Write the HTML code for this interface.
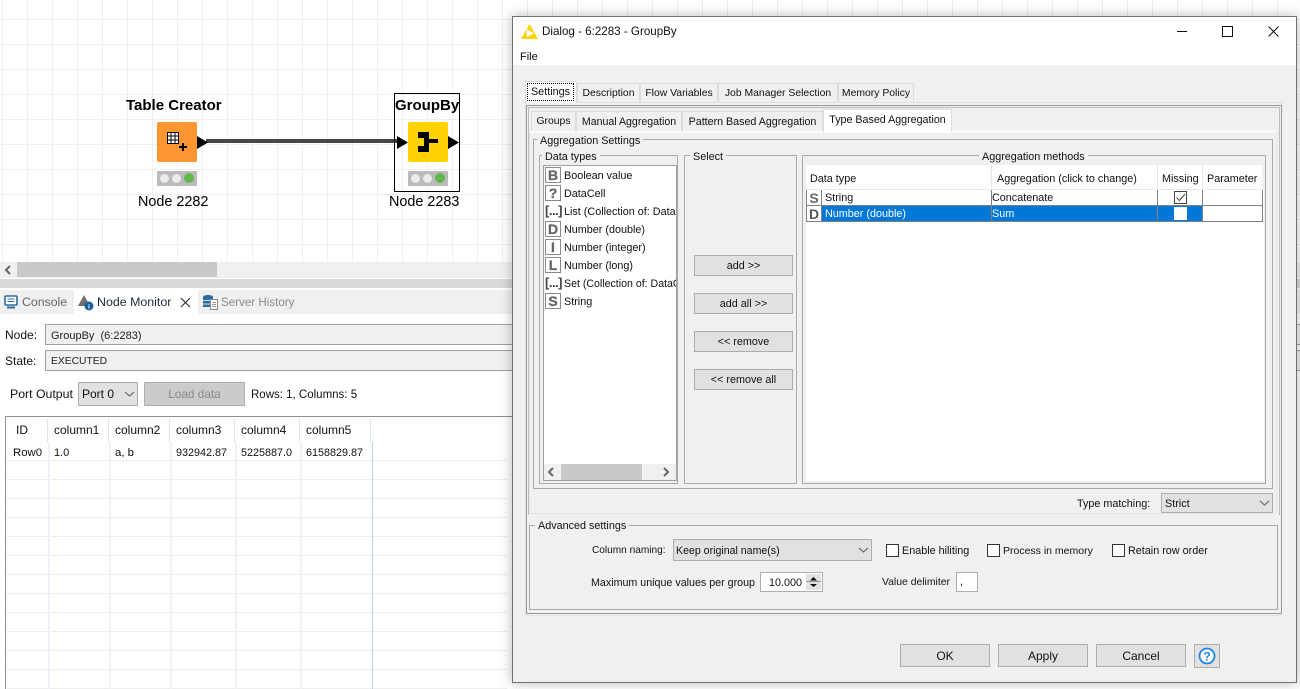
<!DOCTYPE html>
<html><head><meta charset="utf-8"><title>GroupBy</title>
<style>
html,body{margin:0;padding:0}
body{width:1300px;height:689px;overflow:hidden;position:relative;background:#fff;font:10.8px/14px "Liberation Sans",Arial,sans-serif;color:#111}
div,span,svg{position:absolute;box-sizing:border-box}
.t{white-space:nowrap;line-height:14px}
.l{background:#f0f0f0;padding:1px 3px 0 3px;white-space:nowrap;line-height:14px}
.b{background:#e1e1e1;border:1px solid #adadad;text-align:center;white-space:nowrap}
.g{border:1px solid #a9a9a9}
.ti{width:16px;height:16px;left:545px;border:1px solid #8a8a8a;background:#fff;color:#666;font:bold 14px/14px "Liberation Sans",sans-serif;text-align:center;-webkit-text-stroke:.3px #666}
.tb{background:#f0f0f0;border:1px solid #dcdcdc;border-bottom:0;text-align:center;white-space:nowrap;line-height:20px}
.o{font-size:10.4px}
.cb{width:13px;height:13px;border:1px solid #333;background:#fff}
.hl{height:1px;background:#eee;left:7px;width:500px}
.vl{width:2px;background:#eef3fa;top:442px;height:247px}
.s{font-size:12px}
</style></head><body>

<!-- canvas -->
<div style="left:0;top:0;width:1300px;height:262px;background-color:#fff;background-image:linear-gradient(to right,#efefef 1px,transparent 1px),linear-gradient(to bottom,#efefef 1px,transparent 1px);background-size:25px 25px;background-position:2px 19px"></div>
<div style="left:0;top:262px;width:1300px;height:16px;background:#f0f0f0"></div>
<div style="left:17px;top:262px;width:200px;height:15px;background:#c9c9c9"></div>
<svg style="left:4px;top:265px" width="9" height="10"><polyline points="6,1 2,5 6,9" fill="none" stroke="#666" stroke-width="2"/></svg>
<div style="left:0;top:279px;width:1300px;height:9px;background:#dadada"></div>
<div style="left:0;top:290px;width:1300px;height:24px;background:#f0f0f0"></div>

<!-- nodes -->
<div class="t" style="left:126px;top:98px;font:bold 15px/16px 'Liberation Sans',sans-serif;color:#000">Table Creator</div>
<div style="left:157px;top:122px;width:40px;height:40px;background:#ff9632;border-radius:2px"></div>
<svg style="left:157px;top:122px" width="40" height="40">
<rect x="10.5" y="10.5" width="11" height="11" fill="#fff" stroke="#000"/>
<path d="M14 10v12M18 10v12M10 14h12M10 18h12" stroke="#000" stroke-width="1"/>
<path d="M26 21v8M22 25h8" stroke="#000" stroke-width="2"/>
</svg>
<div style="left:206px;top:139px;width:192px;height:4px;background:#474747"></div>
<svg style="left:197px;top:136px" width="12" height="13"><path d="M0 0L11 6.5L0 13Z" fill="#000"/></svg>
<svg style="left:397px;top:136px" width="12" height="13"><path d="M0 0L11 6.5L0 13Z" fill="#000"/></svg>
<div style="left:157px;top:171px;width:40px;height:15px;background:#bbb"></div>
<div style="left:160px;top:174px;width:9px;height:9px;border-radius:50%;background:#ececec"></div>
<div style="left:172px;top:174px;width:9px;height:9px;border-radius:50%;background:#ececec"></div>
<div style="left:184px;top:173px;width:10px;height:10px;border-radius:50%;background:#63b84b"></div>
<div class="t" style="left:138px;top:194px;font-size:14.4px;line-height:16px;color:#000">Node 2282</div>

<div style="left:394px;top:93px;width:66px;height:99px;border:1px solid #000"></div>
<div class="t" style="left:395px;top:98px;font:bold 15px/16px 'Liberation Sans',sans-serif;color:#000">GroupBy</div>
<div style="left:408px;top:122px;width:40px;height:40px;background:#ffd200;border-radius:2px"></div>
<svg style="left:408px;top:122px" width="40" height="40"><path d="M10 10H21V17H30V21H21V30H10V24H16V16H10Z" fill="#000"/></svg>
<svg style="left:448px;top:136px" width="12" height="13"><path d="M0 0L11 6.5L0 13Z" fill="#000"/></svg>
<div style="left:408px;top:171px;width:40px;height:15px;background:#bbb"></div>
<div style="left:411px;top:174px;width:9px;height:9px;border-radius:50%;background:#ececec"></div>
<div style="left:423px;top:174px;width:9px;height:9px;border-radius:50%;background:#ececec"></div>
<div style="left:435px;top:173px;width:10px;height:10px;border-radius:50%;background:#63b84b"></div>
<div class="t" style="left:389px;top:194px;font-size:14.4px;line-height:16px;color:#000">Node 2283</div>

<!-- bottom tabs -->
<svg style="left:4px;top:295px" width="14" height="14"><rect x="1" y="1" width="12" height="9" rx="1" fill="#fff" stroke="#2f6c9e" stroke-width="1.6"/><path d="M3.500 4h7M3.500 6.500h7" stroke="#2f6c9e"/><path d="M3 12.500h8" stroke="#2f6c9e" stroke-width="2"/></svg>
<div class="t" style="left:22px;top:295px;font-size:12.3px;color:#666">Console</div>
<div style="left:74px;top:290px;width:124px;height:24px;background:#fff"></div>
<svg style="left:77px;top:294px" width="17" height="17"><path d="M7 1L13 12H1Z" fill="#6e6e6e"/><circle cx="12" cy="12" r="4.500" fill="#1a5f9e"/><path d="M12 10v.8M12 11.500v3" stroke="#fff"/></svg>
<div class="t" style="left:97px;top:295px;font-size:12.4px;color:#1c2b3a">Node Monitor</div>
<svg style="left:180px;top:297px" width="11" height="11"><path d="M1 1L10 10M10 1L1 10" stroke="#222" stroke-width="1"/></svg>
<svg style="left:202px;top:294px" width="17" height="17"><ellipse cx="6" cy="3" rx="5" ry="2" fill="#2f6c9e"/><rect x="1" y="3" width="10" height="10" fill="#2f6c9e"/><path d="M1 6.500h10M1 10h10" stroke="#cfe0ee"/><rect x="8.500" y="5.500" width="7" height="10" fill="#fff" stroke="#888"/><path d="M10 8.500h4M10 10.500h4M10 12.500h4" stroke="#999"/></svg>
<div class="t" style="left:221px;top:296px;font-size:11.6px;color:#8a8a8a">Server History</div>

<!-- node monitor -->
<div class="t s" style="left:5px;top:328px">Node:</div>
<div style="left:45px;top:324px;width:1255px;height:21px;background:#f0f0f0;border:1px solid #a0a0a0;border-right:0"></div>
<div class="t" style="left:51px;top:329px;color:#222;font-size:11px">GroupBy&nbsp; (6:2283)</div>
<div class="t s" style="left:5px;top:354px">State:</div>
<div style="left:45px;top:350px;width:1255px;height:21px;background:#f0f0f0;border:1px solid #a0a0a0;border-right:0"></div>
<div class="t" style="left:51px;top:355px;font-size:10.3px;color:#222">EXECUTED</div>
<div class="t" style="left:10px;top:387px;font-size:12.3px">Port Output</div>
<div style="left:78px;top:382px;width:60px;height:24px;background:#e1e1e1;border:1px solid #adadad"></div>
<div class="t s" style="left:82px;top:387px">Port 0</div>
<svg style="left:124px;top:391px" width="11" height="7"><polyline points="1,1 5.500,5 10,1" fill="none" stroke="#555"/></svg>
<div class="b" style="left:144px;top:382px;width:101px;height:24px;background:#cbcbcb;color:#8a8a8a;line-height:22px;font-size:11.8px">Load data</div>
<div class="t" style="left:251px;top:388px;font-size:11.5px">Rows: 1, Columns: 5</div>

<!-- output table -->
<div style="left:5px;top:416px;width:510px;height:1px;background:#909090"></div>
<div style="left:5px;top:416px;width:1px;height:273px;background:#909090"></div>
<div style="left:47px;top:418px;width:1px;height:24px;background:#e4e4e4"></div>
<div style="left:108px;top:418px;width:1px;height:24px;background:#e4e4e4"></div>
<div style="left:169px;top:418px;width:1px;height:24px;background:#e4e4e4"></div>
<div style="left:234px;top:418px;width:1px;height:24px;background:#e4e4e4"></div>
<div style="left:299px;top:418px;width:1px;height:24px;background:#e4e4e4"></div>
<div style="left:370px;top:418px;width:1px;height:24px;background:#e4e4e4"></div>
<div class="hl" style="top:460px"></div><div class="hl" style="top:479px"></div><div class="hl" style="top:498px"></div><div class="hl" style="top:517px"></div><div class="hl" style="top:536px"></div><div class="hl" style="top:555px"></div><div class="hl" style="top:574px"></div><div class="hl" style="top:593px"></div><div class="hl" style="top:612px"></div><div class="hl" style="top:631px"></div><div class="hl" style="top:650px"></div><div class="hl" style="top:669px"></div><div class="hl" style="top:688px"></div>
<div class="vl" style="left:48px"></div><div class="vl" style="left:109px"></div><div class="vl" style="left:170px"></div><div class="vl" style="left:235px"></div><div class="vl" style="left:300px"></div>
<div style="left:372px;top:442px;width:1px;height:247px;background:#b5d2f7"></div>
<div class="t s" style="left:16px;top:423px">ID</div>
<div class="t s" style="left:54px;top:423px">column1</div>
<div class="t s" style="left:115px;top:423px">column2</div>
<div class="t s" style="left:176px;top:423px">column3</div>
<div class="t s" style="left:241px;top:423px">column4</div>
<div class="t s" style="left:306px;top:423px">column5</div>
<div class="t" style="left:13px;top:446px;font-size:11.4px">Row0</div>
<div class="t" style="left:54px;top:446px;font-size:11px">1.0</div>
<div class="t" style="left:115px;top:446px;font-size:11.4px">a, b</div>
<div class="t" style="left:176px;top:446px;font-size:10.8px">932942.87</div>
<div class="t" style="left:241px;top:446px;font-size:10.8px">5225887.0</div>
<div class="t" style="left:306px;top:446px;font-size:10.8px">6158829.87</div>

<!-- dialog -->
<div style="left:512px;top:16px;width:785px;height:667px;background:#f0f0f0;border:1px solid #707070;box-shadow:0 0 12px rgba(0,0,0,.28)"></div>
<div style="left:513px;top:17px;width:783px;height:48px;background:#fff"></div>
<svg style="left:521px;top:24px" width="17" height="15"><path d="M8.500 0L17 15H0Z" fill="#ffd200"/><path d="M5.500 5L13 9.500L5.500 13Z" fill="#fff"/></svg>
<div class="t" style="left:542px;top:25px;font-size:11.6px">Dialog - 6:2283 - GroupBy</div>
<div class="t" style="left:520px;top:50px;font-size:11px">File</div>
<div style="left:1177px;top:31px;width:10px;height:1px;background:#111"></div>
<div style="left:1222px;top:26px;width:11px;height:11px;border:1px solid #111"></div>
<svg style="left:1267px;top:25px" width="13" height="13"><path d="M1.500 1.500L11.500 11.500M11.500 1.500L1.500 11.500" stroke="#111" stroke-width="1"/></svg>

<!-- outer tabs -->
<div style="left:525px;top:102px;width:757px;height:514px;border:1px solid #e2e2e2"></div>
<div style="left:526px;top:105px;width:756px;height:509px;border:1px solid #999"></div>
<div style="left:528px;top:107px;width:752px;height:408px;border:1px solid #bdbdbd;border-bottom:0"></div>
<div class="tb o" style="left:577px;top:83px;width:63px;height:19px">Description</div>
<div class="tb o" style="left:640px;top:83px;width:78px;height:19px">Flow Variables</div>
<div class="tb o" style="left:718px;top:83px;width:120px;height:19px">Job Manager Selection</div>
<div class="tb o" style="left:838px;top:83px;width:76px;height:19px">Memory Policy</div>
<div class="tb" style="left:525px;top:81px;width:52px;height:22px;background:#fff;line-height:19px"><span style="left:1px;top:1px;width:47px;height:18px;border:1px dotted #000;line-height:16px">Settings</span></div>

<!-- inner tabs -->
<div style="left:529px;top:130px;width:748px;height:384px;border:1px solid #e6e6e6;border-top:3px solid #fafafa"></div>
<div class="tb" style="left:531px;top:111px;width:45px;height:20px;font-size:10.4px">Groups</div>
<div class="tb" style="left:576px;top:111px;width:106px;height:20px;font-size:10.6px">Manual Aggregation</div>
<div class="tb" style="left:682px;top:111px;width:141px;height:20px;font-size:10.7px">Pattern Based Aggregation</div>
<div class="tb" style="left:823px;top:109px;width:129px;height:23px;background:#fff;line-height:21px;font-size:10.7px">Type Based Aggregation</div>

<!-- aggregation settings -->
<div class="g" style="left:533px;top:139px;width:740px;height:350px"></div>
<div class="l" style="left:537px;top:133px">Aggregation Settings</div>
<div class="g" style="left:539px;top:155px;width:139px;height:329px"></div>
<div class="l" style="left:542px;top:149px">Data types</div>
<div style="left:543px;top:165px;width:134px;height:316px;background:#fff;border:1px solid #a0a0a0;overflow:hidden"></div>

<div class="ti" style="top:167px">B</div><div class="t" style="left:564px;top:169px">Boolean value</div>
<div class="ti" style="top:185px">?</div><div class="t" style="left:564px;top:187px">DataCell</div>
<div class="t" style="left:545px;top:203px;font:bold 13px/16px 'Liberation Sans',sans-serif;color:#444;letter-spacing:-.5px;width:17px">[...]</div><div class="t" style="left:564px;top:205px;width:112px;overflow:hidden">List (Collection of: DataCell)</div>
<div class="ti" style="top:221px">D</div><div class="t" style="left:564px;top:223px">Number (double)</div>
<div class="ti" style="top:239px">I</div><div class="t" style="left:564px;top:241px">Number (integer)</div>
<div class="ti" style="top:257px">L</div><div class="t" style="left:564px;top:259px">Number (long)</div>
<div class="t" style="left:545px;top:275px;font:bold 13px/16px 'Liberation Sans',sans-serif;color:#444;letter-spacing:-.5px;width:17px">[...]</div><div class="t" style="left:564px;top:277px;width:112px;overflow:hidden;font-size:10.6px">Set (Collection of: DataCell)</div>
<div class="ti" style="top:293px">S</div><div class="t" style="left:564px;top:295px">String</div>

<div style="left:544px;top:464px;width:132px;height:16px;background:#f0f0f0"></div>
<div style="left:561px;top:464px;width:81px;height:16px;background:#c9c9c9"></div>
<svg style="left:547px;top:467px" width="9" height="10"><polyline points="6,1 2,5 6,9" fill="none" stroke="#666" stroke-width="2"/></svg>
<svg style="left:662px;top:467px" width="9" height="10"><polyline points="2,1 6,5 2,9" fill="none" stroke="#666" stroke-width="2"/></svg>

<div class="g" style="left:684px;top:155px;width:113px;height:329px"></div>
<div class="l" style="left:690px;top:149px">Select</div>
<div class="b" style="left:694px;top:255px;width:99px;height:21px;line-height:21px">add &gt;&gt;</div>
<div class="b" style="left:694px;top:293px;width:99px;height:21px;line-height:21px">add all &gt;&gt;</div>
<div class="b" style="left:694px;top:331px;width:99px;height:21px;line-height:21px">&lt;&lt; remove</div>
<div class="b" style="left:694px;top:369px;width:99px;height:21px;line-height:21px">&lt;&lt; remove all</div>

<div class="g" style="left:802px;top:155px;width:464px;height:329px"></div>
<div class="l" style="left:979px;top:149px">Aggregation methods</div>
<div style="left:806px;top:190px;width:458px;height:291px;background:#fff"></div>
<div style="left:806px;top:165px;width:456px;height:24px;background:#fff"></div>
<div style="left:991px;top:165px;width:1px;height:24px;background:#e8e8e8"></div>
<div style="left:1157px;top:165px;width:1px;height:24px;background:#e8e8e8"></div>
<div style="left:1202px;top:165px;width:1px;height:24px;background:#e8e8e8"></div>
<div style="left:806px;top:189px;width:457px;height:1px;background:#e8e8e8"></div>
<div class="t" style="left:810px;top:172px">Data type</div>
<div class="t" style="left:997px;top:172px">Aggregation (click to change)</div>
<div class="t" style="left:1162px;top:172px">Missing</div>
<div class="t" style="left:1207px;top:172px">Parameter</div>

<div style="left:822px;top:206px;width:380px;height:15px;background:#0078d7"></div>
<div style="left:806px;top:205px;width:457px;height:1px;background:#808080"></div>
<div style="left:806px;top:221px;width:457px;height:1px;background:#808080"></div>
<div style="left:806px;top:190px;width:1px;height:32px;background:#808080"></div>
<div style="left:821px;top:190px;width:1px;height:32px;background:#808080"></div>
<div style="left:991px;top:190px;width:1px;height:32px;background:#808080"></div>
<div style="left:1157px;top:190px;width:1px;height:32px;background:#808080"></div>
<div style="left:1202px;top:190px;width:1px;height:32px;background:#808080"></div>
<div style="left:1262px;top:190px;width:1px;height:32px;background:#808080"></div>
<div class="t" style="left:807px;top:191px;width:14px;text-align:center;font:bold 14px/14px 'Liberation Sans',sans-serif;color:#666">S</div>
<div class="t" style="left:807px;top:207px;width:14px;text-align:center;font:bold 14px/14px 'Liberation Sans',sans-serif;color:#555">D</div>
<div class="t" style="left:825px;top:191px">String</div>
<div class="t" style="left:825px;top:207px;color:#fff">Number (double)</div>
<div class="t" style="left:992px;top:191px">Concatenate</div>
<div class="t" style="left:992px;top:207px;color:#fff">Sum</div>
<div class="cb" style="left:1174px;top:191px;border-color:#444"></div>
<svg style="left:1174px;top:191px" width="13" height="13"><polyline points="2.500,6.500 5.500,9.500 11,3" fill="none" stroke="#444" stroke-width="1"/></svg>
<div style="left:1174px;top:207px;width:13px;height:13px;background:#fff"></div>

<!-- type matching -->
<div class="t" style="left:1077px;top:497px">Type matching:</div>
<div style="left:1161px;top:493px;width:112px;height:20px;background:#e1e1e1;border:1px solid #adadad"></div>
<div class="t" style="left:1165px;top:497px">Strict</div>
<svg style="left:1259px;top:500px" width="11" height="7"><polyline points="1,1 5.500,5 10,1" fill="none" stroke="#555"/></svg>

<!-- advanced -->
<div class="g" style="left:529px;top:525px;width:749px;height:85px"></div>
<div class="l" style="left:535px;top:518px">Advanced settings</div>
<div class="t" style="left:592px;top:544px;font-size:10.1px">Column naming:</div>
<div style="left:673px;top:539px;width:199px;height:22px;background:#e1e1e1;border:1px solid #adadad"></div>
<div class="t" style="left:676px;top:544px;font-size:10.6px">Keep original name(s)</div>
<svg style="left:858px;top:547px" width="11" height="7"><polyline points="1,1 5.500,5 10,1" fill="none" stroke="#555"/></svg>
<div class="cb" style="left:886px;top:544px"></div><div class="t" style="left:902px;top:544px">Enable hiliting</div>
<div class="cb" style="left:987px;top:544px"></div><div class="t" style="left:1003px;top:544px;font-size:10.5px">Process in memory</div>
<div class="cb" style="left:1112px;top:544px"></div><div class="t" style="left:1128px;top:544px">Retain row order</div>
<div class="t" style="left:591px;top:576px;font-size:10.7px">Maximum unique values per group</div>
<div style="left:760px;top:572px;width:63px;height:20px;background:#fff;border:1px solid #adadad"></div>
<div class="t" style="left:769px;top:576px">10.000</div>
<div style="left:806px;top:574px;width:15px;height:16px;background:#e1e1e1"></div>
<div style="left:806px;top:581px;width:15px;height:1px;background:#999"></div>
<svg style="left:806px;top:574px" width="15" height="16"><path d="M7.500 3L11 6.500H4ZM4 10H11L7.500 13Z" fill="#000"/></svg>
<div class="t" style="left:882px;top:576px;font-size:10.4px">Value delimiter</div>
<div style="left:956px;top:572px;width:22px;height:20px;background:#fff;border:1px solid #adadad"></div>
<div class="t" style="left:960px;top:575px">,</div>

<!-- footer -->
<div class="b" style="left:900px;top:644px;width:90px;height:23px;line-height:22px;font-size:12px">OK</div>
<div class="b" style="left:998px;top:644px;width:90px;height:23px;line-height:22px;font-size:12px">Apply</div>
<div class="b" style="left:1096px;top:644px;width:90px;height:23px;line-height:22px;font-size:12px">Cancel</div>
<div class="b" style="left:1194px;top:644px;width:26px;height:24px"></div>
<svg style="left:1198px;top:647px" width="18" height="18"><circle cx="9" cy="9" r="7.500" fill="#fff" stroke="#1e88e5" stroke-width="1.800"/><text x="9" y="13.500" font-family="Liberation Sans" font-weight="bold" font-size="12" fill="#1e88e5" text-anchor="middle">?</text></svg>
</body></html>
